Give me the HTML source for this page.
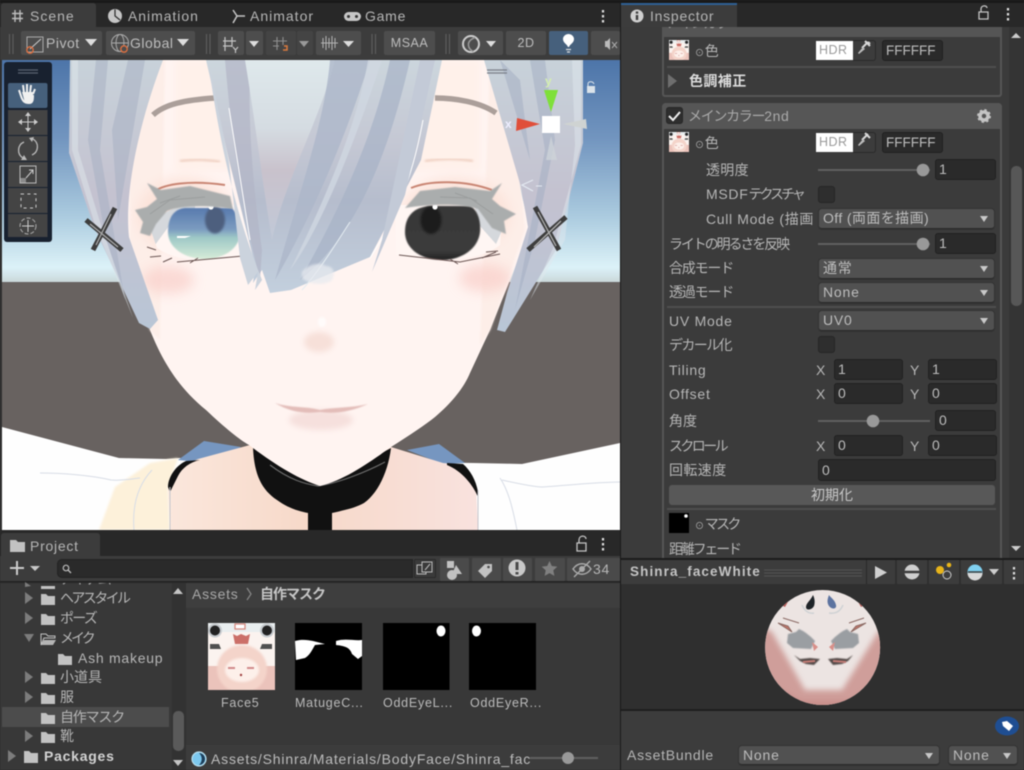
<!DOCTYPE html>
<html><head><meta charset="utf-8"><style>
html,body{margin:0;padding:0;background:#282828;width:1024px;height:770px;overflow:hidden}
#r{position:relative;width:1024px;height:770px;overflow:hidden;filter:blur(.4px);font-family:"Liberation Sans","Noto Sans CJK JP",sans-serif}
#r div{position:absolute;box-sizing:border-box}
.t{white-space:nowrap;height:16px;line-height:16px;font-size:14px;letter-spacing:.75px;color:#b6b6b6}
.c{letter-spacing:0;}
.b{font-weight:bold;color:#d4d4d4}
.dd{background:#515151;border-radius:3px;border-bottom:1px solid #2b2b2b;box-shadow:0 0 0 1px #333;color:#bdbdbd;font-size:14px;letter-spacing:.8px;line-height:19px;padding-left:4px;white-space:nowrap}
.dd:after{content:"";position:absolute;right:6px;top:7px;border:4.5px solid transparent;border-top:6px solid #c8c8c8;border-bottom:0}
.f{background:#2a2a2a;border:1px solid #212121;border-radius:3px;color:#bdbdbd;font-size:14px;letter-spacing:.6px;line-height:19px;padding-left:3px;white-space:nowrap}
.btn{background:#4d4d4d;border-radius:2px;color:#bdbdbd;font-size:12.5px;letter-spacing:.5px;text-align:center;line-height:24px;white-space:nowrap}
.pb{background:#4a4a4a;border-radius:1px}
.cb{background:#2e2e2e;border:1px solid #262626;border-radius:3px}
</style></head><body><div id="r">

<div style="left:0;top:0;width:1024px;height:3px;background:#191919"></div>
<div style="left:0;top:3px;width:620px;height:24px;background:#282828"></div>
<div style="left:1px;top:3px;width:95px;height:24px;background:#3c3c3c;border-radius:3px 3px 0 0"></div>
<div class="t" style="left:30px;top:8px;letter-spacing:1px">Scene</div>
<div class="t" style="left:128px;top:8px;letter-spacing:.95px">Animation</div>
<div class="t" style="left:250px;top:8px;letter-spacing:1px">Animator</div>
<div class="t" style="left:365px;top:8px">Game</div>
<div style="left:0;top:27px;width:620px;height:33px;background:#3c3c3c"></div>

<div class="btn" style="left:21px;top:31px;width:81px;height:24px;text-align:left;padding-left:25px;font-size:14px">Pivot</div>
<div class="btn" style="left:106px;top:31px;width:89px;height:24px;text-align:left;padding-left:24px;font-size:14px">Global</div>
<div class="btn" style="left:218px;top:31px;width:26px;height:24px"></div>
<div class="btn" style="left:246px;top:31px;width:17px;height:24px"></div>
<div class="btn" style="left:266px;top:31px;width:30px;height:24px;background:#444"></div>
<div class="btn" style="left:297px;top:31px;width:16px;height:24px;background:#444"></div>
<div class="btn" style="left:316px;top:31px;width:45px;height:24px"></div>
<div class="btn" style="left:384px;top:31px;width:51px;height:24px">MSAA</div>
<div class="btn" style="left:458px;top:31px;width:45px;height:24px"></div>
<div class="btn" style="left:506px;top:31px;width:40px;height:24px">2D</div>
<div class="btn" style="left:549px;top:31px;width:39px;height:24px;background:#46607c"></div>
<div class="btn" style="left:591px;top:31px;width:29px;height:24px"></div>

<!-- SCENE -->
<svg style="position:absolute;left:0;top:0" width="1024" height="770" viewBox="0 0 1024 770">
<defs>
<clipPath id="sc"><rect x="2" y="60" width="618" height="470"/></clipPath>
<linearGradient id="sky" x1="0" y1="60" x2="0" y2="283" gradientUnits="userSpaceOnUse"><stop offset="0" stop-color="#4d75a9"/><stop offset=".35" stop-color="#7295bf"/><stop offset=".7" stop-color="#abcbdf"/><stop offset=".93" stop-color="#dcf2f8"/><stop offset="1" stop-color="#c9d6d8"/></linearGradient>
<linearGradient id="hc" x1="0" y1="60" x2="0" y2="295" gradientUnits="userSpaceOnUse"><stop offset="0" stop-color="#ccd6dd"/><stop offset=".35" stop-color="#c5c8d4"/><stop offset=".6" stop-color="#b6bdcd"/><stop offset="1" stop-color="#c3d0de"/></linearGradient>
<linearGradient id="hl" x1="0" y1="60" x2="0" y2="230" gradientUnits="userSpaceOnUse"><stop offset="0" stop-color="#dfe9ec"/><stop offset=".4" stop-color="#d5dce2"/><stop offset=".65" stop-color="#c9c2cc"/><stop offset="1" stop-color="#c2c8d6"/></linearGradient>
<linearGradient id="hs" x1="0" y1="60" x2="0" y2="330" gradientUnits="userSpaceOnUse"><stop offset="0" stop-color="#c8d2da"/><stop offset=".5" stop-color="#c4c2d0"/><stop offset="1" stop-color="#b9c6d6"/></linearGradient>
<linearGradient id="iris" x1="0" y1="208" x2="0" y2="259" gradientUnits="userSpaceOnUse"><stop offset="0" stop-color="#587aae"/><stop offset=".42" stop-color="#7c9cc0"/><stop offset=".58" stop-color="#9ec8c6"/><stop offset="1" stop-color="#d6ecd8"/></linearGradient>
<linearGradient id="ir2" x1="0" y1="205" x2="0" y2="262" gradientUnits="userSpaceOnUse"><stop offset="0" stop-color="#383838"/><stop offset=".8" stop-color="#3b3b3b"/><stop offset="1" stop-color="#1c1c1c"/></linearGradient>
<linearGradient id="neck" x1="170" y1="0" x2="478" y2="0" gradientUnits="userSpaceOnUse"><stop offset="0" stop-color="#fbe7dc"/><stop offset=".45" stop-color="#f7d9c9"/><stop offset="1" stop-color="#f9e2de"/></linearGradient>
<filter id="b05"><feGaussianBlur stdDeviation=".5"/></filter>
<filter id="b1"><feGaussianBlur stdDeviation="1"/></filter>
<filter id="b3" x="-50%" y="-50%" width="200%" height="200%"><feGaussianBlur stdDeviation="3"/></filter>
<filter id="b6" x="-50%" y="-50%" width="200%" height="200%"><feGaussianBlur stdDeviation="6"/></filter>
<clipPath id="el"><path d="M150,228C158,214 175,206 190,205H245L250,257C215,263 178,263 157,248Z"/></clipPath>
<clipPath id="er"><path d="M395,205H480L502,222 500,245C480,262 430,264 396,255Z"/></clipPath>
<clipPath id="sph"><circle cx="822.6" cy="647.5" r="57.5"/></clipPath>
<symbol id="face" viewBox="0 0 67 67">
<rect width="67" height="67" fill="#ebc3bb"/><rect width="67" height="43" fill="#fbf3ef"/><rect width="67" height="9" fill="#e9eeef"/>
<circle cx="7" cy="7.5" r="7" fill="#c8ccd0"/><circle cx="7" cy="7.5" r="5" fill="#222"/><circle cx="59" cy="7.5" r="7" fill="#c8ccd0"/><circle cx="59" cy="7.5" r="5" fill="#222"/>
<rect x="27" y="1" width="10" height="5" fill="#fff" stroke="#d58a80" stroke-width="1.3"/><path d="M25,11L29,13 33,11 38,13 42,11 40,21 27,21Z" fill="#cb6f68"/>
<path d="M2,21h9l2,5h-11zM54,21h10v5h-12z" fill="#505050"/>
<ellipse cx="34" cy="46" rx="25" ry="24" fill="#f4d4ca" filter="url(#b1)"/><ellipse cx="34" cy="47" rx="17" ry="12" fill="#fdf0ea" filter="url(#b1)"/>
<rect x="20" y="44" width="7" height="2" fill="#d08a8a"/><rect x="39" y="44" width="7" height="2" fill="#d08a8a"/><circle cx="33" cy="52" r="1.200" fill="#a04040"/>
</symbol>
</defs>

<g clip-path="url(#sc)">
<rect x="0" y="60" width="620" height="224" fill="url(#sky)"/>
<rect x="0" y="282" width="620" height="250" fill="#686260"/>
<path d="M2,427L119,458 166,459 180,458 474,463 522,464 620,443V530H2Z" fill="#fefefe"/>
<path d="M99,530L115,487 150,463 178,458 168,487 170,530Z" fill="#fdf1da" filter="url(#b1)"/>
<path d="M40,473C60,473 90,475 111,480C122,481 130,479 140,478M502,480C520,484 535,487 542,487C570,485 600,482 620,482M134,530C132,505 138,485 152,470M517,530C512,505 508,490 500,478" fill="none" stroke="#d8dde6" stroke-width="1"/>
<path d="M178,460L204,441 241,447 215,462 198,462ZM407,450L439,444 465,463 443,464Z" fill="#7696c0"/>
<path d="M168,487L176,468 198,459 250,445 391,447 443,463 463,465 476,487 478,530H170Z" fill="url(#neck)"/>
<path d="M168,487C168,478 175,466 186,461L200,460C190,462 182,468 178,476L170,492ZM447,463L463,464C470,470 476,480 478,492L478,497C473,485 462,471 447,465Z" fill="#111"/>
<path d="M170,487L170,530M478,490L478,530" stroke="#c6c6cc" stroke-width="1"/>
<path d="M253,447C254,475 262,490 277,500C288,508 298,511 308,513V530H332V513C345,510 355,508 364,503C378,493 388,472 391,448L320,486Z" fill="#111"/>
<path d="M270,465C290,480 305,484 318,486C340,483 370,470 385,462" fill="none" stroke="#6a6a6a" stroke-width="1.200"/>
<path d="M125,60L125,240 150,330C160,355 175,385 206,410C225,428 240,440 249,445C275,465 300,480 320,486C345,480 370,462 391,447C410,435 425,425 435,417C455,400 465,385 470,373L490,330 530,230 490,60Z" fill="#fff4f1"/>
<path d="M130,60L130,240 150,330 160,340 165,60ZM510,60L525,230 490,330 480,345 490,60Z" fill="#fdeee8" filter="url(#b1)"/>
<rect x="175" y="60" width="305" height="110" fill="#fff1ea" opacity=".9" filter="url(#b3)"/>
<!-- blush -->
<ellipse cx="168" cy="280" rx="26" ry="14" fill="#f9cfc9" opacity=".7" filter="url(#b6)"/>
<ellipse cx="485" cy="278" rx="26" ry="14" fill="#f9cfc9" opacity=".7" filter="url(#b6)"/>
<ellipse cx="185" cy="215" rx="48" ry="38" fill="#fce1d7" opacity=".8" filter="url(#b6)"/>
<ellipse cx="455" cy="215" rx="55" ry="38" fill="#fce1d7" opacity=".8" filter="url(#b6)"/>
<!-- brows -->
<path d="M153,115C165,104 185,100 215,98" fill="none" stroke="#ab9f9a" stroke-width="5.500"/>
<path d="M435,98C455,98 480,102 496,113" fill="none" stroke="#ab9f9a" stroke-width="5.500"/>
<path d="M180,161Q200,158 220,162M425,161Q450,157 473,161" fill="none" stroke="#eac5b4" stroke-width="2" filter="url(#b1)" opacity=".9"/>
<path d="M155,191C165,184 190,180 225,185M411,188C430,180 465,180 492,190" fill="none" stroke="#c98674" stroke-width="2"/>
<!-- left eye -->
<path d="M150,228C158,214 175,206 190,205H245L250,257C215,263 178,263 157,248Z" fill="#fff6f3"/>
<g clip-path="url(#el)"><path d="M145,235C155,215 170,205 195,205V222H172L155,245Z" fill="#d5d8dc"/>
<path d="M168,232C168,216 175,209 185,208H232C238,215 241,225 240,235C238,250 222,259 205,259C185,259 168,248 168,232Z" fill="url(#iris)" filter="url(#b05)"/>
<ellipse cx="215" cy="220" rx="10" ry="13.500" fill="#4d5f7e" filter="url(#b1)"/>
<path d="M177,236h14l-6,2h-8z" fill="#fff"/></g>
<circle cx="211" cy="207" r="2.600" fill="#fff"/>
<!-- right eye -->
<path d="M395,205H480L502,222 500,245C480,262 430,264 396,255Z" fill="#fff6f3"/>
<g clip-path="url(#er)"><path d="M474,204L504,226 496,244 480,226Z" fill="#d5d8dc"/>
<path d="M405,232C405,215 415,207 430,206H470C478,210 481,222 480,232C478,250 460,260 442,260C420,260 405,248 405,232Z" fill="url(#ir2)" filter="url(#b05)"/>
<ellipse cx="431" cy="220" rx="10.500" ry="14" fill="#1e1e1e" filter="url(#b1)"/></g>
<circle cx="435" cy="207" r="2.600" fill="#fff"/>
<!-- lashes -->
<path d="M147,183L161,190 190,186 230,196 233,209C210,205 180,205 167,211L156,224 150,236 140,233 143,222 135,210 147,207 157,199Z" fill="#aaadad" filter="url(#b05)"/>
<path d="M502,183L490,191 455,187 420,191 405,208C430,204 460,203 478,209L492,228 506,234 504,221 516,214 500,206 492,199Z" fill="#aaadad" filter="url(#b05)"/>
<path d="M150,214L170,200 205,197M160,203l20,-7M440,197L470,198 493,214M455,193l22,8" fill="none" stroke="#979a9a" stroke-width="1" opacity=".8"/>
<path d="M147,247l9,3M150,257l11,-1M163,262l9,-4M177,262L243,256M190,263l8,-5" fill="none" stroke="#6a5553" stroke-width="1"/>
<path d="M399,255L460,262 500,254M458,264l-8,-5M482,258l14,-6M486,252l12,-1" fill="none" stroke="#6a5553" stroke-width="1"/>
<!-- nose / mouth -->
<ellipse cx="319" cy="342" rx="15" ry="10" fill="#f7e0d9" filter="url(#b3)"/>
<ellipse cx="322" cy="322" rx="4" ry="5" fill="#fff" opacity=".7" filter="url(#b1)"/>
<ellipse cx="321" cy="420" rx="32" ry="10" fill="#f6e0dd" filter="url(#b3)"/>
<path d="M275,403C290,408 305,406 320,410C335,407 352,408 368,404C350,412 335,414 320,412C305,414 290,412 275,403Z" fill="#e3bdb9" filter="url(#b05)"/>
<!-- side hair left -->
<path d="M70,60L69,153 94,227 139,323 150,329 158,320 129,237C124,190 140,120 163,60Z" fill="url(#hs)"/>
<path d="M96,60L88,140 105,235 125,300 100,150 108,60ZM128,60L112,130 118,220 145,60Z" fill="#a8b0c3" opacity=".55"/>
<path d="M72,60L72,150 95,225 133,318 100,222 78,150 78,60Z" fill="#dfe7ec" opacity=".5"/>
<!-- side hair right -->
<path d="M484,60L521,187 528,227 507,293 497,330 505,332 556,250 583,143 583,60Z" fill="url(#hs)"/>
<path d="M545,60L555,140 535,240 515,310 545,150 530,60ZM500,60L530,160 520,80Z" fill="#a4aec2" opacity=".55"/>
<path d="M581,60L581,145 553,248 530,300 565,240 575,145 572,60Z" fill="#e0e8ed" opacity=".5"/>
<!-- centre hair -->
<path d="M206,60L229,160 253,257 246,275 255,268 253,283 262,270 270,293 291,290 370,257 421,160 442,60Z" fill="url(#hc)"/>
<path d="M225,60C232,140 240,200 260,280L262,250C252,180 248,120 250,60Z" fill="#b2b5c6" opacity=".7"/>
<path d="M245,60C255,120 262,180 272,240C285,180 320,120 335,60Z" fill="url(#hl)"/>
<path d="M330,60C325,120 300,190 275,280C310,220 345,140 370,60Z" fill="#adb7c9" opacity=".8"/>
<path d="M368,60C358,120 330,190 290,270C320,230 352,150 382,60Z" fill="#d0d7e1" opacity=".8"/>
<path d="M390,60C375,130 345,200 300,280C350,240 385,170 410,60Z" fill="#a7b2c6" opacity=".7"/>
<path d="M208,60C220,150 238,220 262,280L255,290 258,272 248,285 240,258 229,162Z" fill="#cbd3dd"/>
<path d="M229,108L250,240M423,120C412,180 395,220 370,258" fill="none" stroke="#fff" stroke-width="1"/>
<path d="M420,60H435L405,195 372,272 382,240Z" fill="#c3cad7"/>
<path d="M302,290C320,270 335,245 350,222" fill="none" stroke="#e5edf2" stroke-width="1"/>
<path d="M302,272c6,-8 18,-10 24,-6 7,0 10,6 6,14 -5,5 -22,6 -30,-2Z" fill="#e8ebf0" opacity=".75" filter="url(#b1)"/>
<!-- pins -->
<path d="M86,220L122,250M115,208L93,250" stroke="#3d3d3d" stroke-width="5" fill="none"/>
<path d="M90,224L118,247M111,214L96,245" stroke="#a8a8a8" stroke-width="1.300" fill="none"/>
<path d="M535,207L559,250M566,217L528,250" stroke="#3d3d3d" stroke-width="5" fill="none"/>
<path d="M538,212L556,246M561,221L534,247" stroke="#b0b0b0" stroke-width="1.300" fill="none"/>
<path d="M487,70h20M487,73h20" stroke="#7a7f88" stroke-width="1.200"/>
<!-- gizmo -->
<path d="M551,112L544,90H558Z" fill="#7fe03a"/>
<path d="M540,124L517,118 516,131Z" fill="#e04f3a"/>
<path d="M563,124L586,119 587,129Z" fill="#cfd3d2"/>
<path d="M551,136L546,160H557Z" fill="#cdd3d8" opacity=".8"/>
<rect x="542" y="116" width="18" height="17" fill="#fff"/>
<path d="M533,180L522,185 533,191" fill="none" stroke="#e3e9f1" stroke-width="1.200"/>
<path d="M536,186h6" stroke="#e3e9f1" stroke-width="1"/>
<rect x="587" y="86" width="8" height="7" fill="#dbe3ea"/><path d="M588,86v-2c0,-3 5,-3 6,0" fill="none" stroke="#dbe3ea"/>
</g>

<text x="505" y="128" font-size="12" font-weight="bold" fill="#eef" font-family="Liberation Sans">x</text>
<text x="545" y="85" font-size="12" font-weight="bold" fill="#d4eeb0" font-family="Liberation Sans">y</text>

<!-- overlay tool -->
<rect x="4" y="62" width="48" height="180" rx="3" fill="#18212f"/>
<path d="M18,70h20M18,73h20" stroke="#596371" stroke-width="1.200"/>
<rect x="8" y="83" width="39.500" height="25" rx="2" fill="#46607c"/>
<rect x="8" y="110" width="39.500" height="25" fill="#444"/>
<rect x="8" y="136" width="39.500" height="25" fill="#444"/>
<rect x="8" y="162" width="39.500" height="25" fill="#444"/>
<rect x="8" y="188" width="39.500" height="25" fill="#444"/>
<rect x="8" y="214" width="39.500" height="23" fill="#444"/>
<path d="M21,96l-2,-6M24,93l-1,-8M27,93l0,-9M30,93l1,-8M33,94l2,-5M21,96c2,6 4,7 8,7 4,0 4,-4 4,-8" stroke="#f0f0f0" stroke-width="2" fill="none"/><path d="M22,92h11v8l-3,3h-5Z" fill="#f0f0f0"/>
<path d="M28,114v16M20,122h16" stroke="#ccc" stroke-width="1"/><path d="M28,112l-3,4h6zM28,132l-3,-4h6zM18,122l4,-3v6zM38,122l-4,-3v6z" fill="#ccc"/>
<path d="M24,142a9,9 0 0 0 -1,16M32,155a9,9 0 0 0 1,-16" fill="none" stroke="#bbb" stroke-width="1.300"/><path d="M24,155l3,5h-6zM32,142l-3,-4 5,-1z" fill="#bbb"/>
<rect x="20" y="166" width="16" height="17" fill="none" stroke="#bbb" stroke-width="1"/><path d="M26,178l7,-8M29,170h4v4" fill="none" stroke="#ccc"/><rect x="20" y="178" width="6" height="5" fill="#bbb" opacity=".6"/>
<rect x="21" y="194" width="15" height="14" fill="none" stroke="#ccc" stroke-dasharray="3 3.400"/>
<circle cx="28" cy="226" r="8" fill="none" stroke="#aaa" stroke-dasharray="4 2"/><path d="M28,220v12M22,226h12" stroke="#ccc"/>

<!-- tab icons -->
<path d="M15,10v12M20,10v12M12,13.500h11M12,18.500h11" stroke="#bdbdbd" stroke-width="1.400"/>
<circle cx="115" cy="16" r="7" fill="#c6c6c6"/><path d="M115,9.500v6.500l5,4" stroke="#282828" fill="none" stroke-width="1.200"/>
<path d="M233,10l4,6 -4,7M237,16h8" stroke="#c6c6c6" stroke-width="1.500" fill="none"/>
<rect x="344" y="12" width="17" height="9" rx="4.500" fill="#c6c6c6"/><circle cx="348.500" cy="16.500" r="1.500" fill="#333"/><circle cx="356.500" cy="16.500" r="1.500" fill="#333"/>
<path d="M603,10v2.500M603,15v2.500M603,20v2.500" stroke="#ddd" stroke-width="2.200" fill="none"/>
<!-- toolbar grips and icons -->
<path d="M9.500,34v20M13,34v20M206.500,34v20M210,34v20M372,34v20M375.500,34v20M446,34v20M449.500,34v20" stroke="#5c5c5c" stroke-width="1.200"/>
<rect x="27" y="37" width="16" height="15" fill="none" stroke="#aaa"/><path d="M30,49L41,39" stroke="#ccc"/><circle cx="30" cy="50" r="3.200" fill="none" stroke="#e07040" stroke-width="1.300"/>
<path d="M85,39h12l-6,7Z" fill="#ddd"/>
<circle cx="120" cy="43" r="8.500" fill="none" stroke="#aaa"/><ellipse cx="120" cy="43" rx="4" ry="8.500" fill="none" stroke="#aaa"/><path d="M111.500,43h17" stroke="#aaa"/><circle cx="124" cy="49" r="3.200" fill="#4d4d4d" stroke="#e07040" stroke-width="1.300"/>
<path d="M177,39h12l-6,7Z" fill="#ddd"/>
<path d="M225,37v14M232,37v10M223,41h13M223,46h9M233,47l2.500,3 2.500,-3M235.500,50v3" stroke="#c4c4c4" fill="none" stroke-width="1.200"/>
<path d="M249,41h10l-5,6Z" fill="#ddd"/>
<path d="M277,37v13M283,37v8M273,41h14M273,46h6" stroke="#8e8e8e" fill="none" stroke-width="1.100"/><path d="M284,46h3v4h-4" stroke="#d97a3f" fill="none" stroke-width="1.500"/>
<path d="M299,41h10l-5,6Z" fill="#999"/>
<path d="M321,43h17M323,38v10M326,36v14M329,38v10M332,36v14M335,38v10" stroke="#b4b4b4" fill="none"/>
<path d="M343,41h11l-5.500,6Z" fill="#ddd"/>
<circle cx="471" cy="44" r="8" fill="none" stroke="#ccc" stroke-width="2"/><path d="M475,37.500c-5,2 -7,5 -6.500,8 .4,3 2.500,5 5,6" fill="none" stroke="#999" stroke-width="1.500"/>
<path d="M486,41h10l-5,6Z" fill="#ddd"/>
<path d="M568,47c-1,-3 -5,-4 -5,-8 0,-3 3,-5 5.500,-5 2.500,0 5.500,2 5.500,5 0,4 -4,5 -5,8Z" fill="#fff"/><path d="M566,49.500h5M567,52h3" stroke="#ddd" stroke-width="1.300"/>
<path d="M605,41h2l3,-3v12l-3,-3h-2Z" fill="#bbb"/><path d="M612,42l5,6M617,42l-5,6" stroke="#aaa" stroke-width="1"/>
</svg>

<!-- Vertical gap -->
<div style="left:620px;top:3px;width:1px;height:767px;background:#1a1a1a"></div>
<div style="left:0;top:60px;width:2px;height:470px;background:#303030"></div>

<!-- PROJECT -->
<div style="left:0;top:530px;width:620px;height:27px;background:#282828"></div>
<div style="left:1px;top:533px;width:99px;height:24px;background:#3c3c3c;border-radius:3px 3px 0 0"></div>
<div class="t" style="left:30px;top:538px">Project</div>
<div style="left:0;top:556px;width:620px;height:26px;background:#3c3c3c;border-bottom:1px solid #232323"></div>
<div style="left:57px;top:559px;width:356px;height:19px;background:#2a2a2a;border:1px solid #232323;border-radius:5px 0 0 5px"></div>
<div class="pb" style="left:414px;top:559px;width:22px;height:19px;background:#3a3a3a;border:1px solid #2a2a2a"></div>
<div class="pb" style="left:440px;top:558px;width:29px;height:23px"></div>
<div class="pb" style="left:472px;top:558px;width:29px;height:23px"></div>
<div class="pb" style="left:503px;top:558px;width:29px;height:23px"></div>
<div class="pb" style="left:535px;top:558px;width:30px;height:23px"></div>
<div class="pb" style="left:567px;top:558px;width:53px;height:23px"></div>
<div class="t" style="left:593px;top:561px">34</div>

<div style="left:0;top:583px;width:186px;height:187px;background:#383838"></div>
<div style="left:172px;top:583px;width:14px;height:187px;background:#323232"></div>
<div style="left:173px;top:711px;width:11px;height:40px;background:#5a5a5a;border-radius:5px"></div>
<div style="left:2px;top:707px;width:167px;height:20px;background:#4c4c4c"></div>
<div style="left:60px;top:583px;width:60px;height:4px;overflow:hidden"><div class="t c" style="left:0;top:-12px;letter-spacing:-1px">アイテム</div></div>
<div class="t c" style="left:60px;top:590px;letter-spacing:-2.6px">ヘアスタイル</div>
<div class="t c" style="left:60px;top:610px;letter-spacing:-1.7px">ポーズ</div>
<div class="t c" style="left:60px;top:630px;letter-spacing:-3px">メイク</div>
<div class="t" style="left:78px;top:650px">Ash makeup</div>
<div class="t c" style="left:60px;top:669px">小道具</div>
<div class="t c" style="left:60px;top:689px">服</div>
<div class="t c" style="left:60px;top:709px;letter-spacing:-1.200px">自作マスク</div>
<div class="t c" style="left:60px;top:728px">靴</div>
<div class="t b" style="left:44px;top:748px">Packages</div>

<div style="left:186px;top:583px;width:434px;height:187px;background:#383838"></div>
<div style="left:186px;top:583px;width:434px;height:25px;background:#3e3e3e"></div>
<div class="t" style="left:192px;top:586px;color:#a8a8a8">Assets</div>
<div class="t b c" style="left:260px;top:586px;color:#c6c6c6;letter-spacing:-1px">自作マスク</div>
<div class="t" style="left:221px;top:695px;font-size:12.500px;color:#bbb">Face5</div>
<div class="t" style="left:295px;top:695px;font-size:12.500px;color:#bbb">MatugeC...</div>
<div class="t" style="left:383px;top:695px;font-size:12.500px;color:#bbb">OddEyeL...</div>
<div class="t" style="left:470px;top:695px;font-size:12.500px;color:#bbb">OddEyeR...</div>
<div style="left:186px;top:745px;width:434px;height:25px;background:#3c3c3c"></div>
<div class="t" style="left:211px;top:751px;width:319px;overflow:hidden;color:#bdbdbd;letter-spacing:.82px">Assets/Shinra/Materials/BodyFace/Shinra_faceWhite</div>

<!-- INSPECTOR -->
<div style="left:621px;top:3px;width:403px;height:24px;background:#282828"></div>
<div style="left:621px;top:4px;width:116px;height:23px;background:#3c3c3c"></div>
<div style="left:621px;top:3px;width:116px;height:2px;background:#2e6094"></div>
<div class="t" style="left:650px;top:8px">Inspector</div>
<div style="left:621px;top:27px;width:403px;height:532px;background:#3b3b3b"></div>
<div style="left:1009px;top:27px;width:15px;height:532px;background:#343434"></div>
<div style="left:1011px;top:166px;width:11px;height:140px;background:#575757;border-radius:5px"></div>

<div style="left:662px;top:27px;width:340px;height:70px;background:#3b3b3b;border:2px solid #555;border-top:0;border-radius:0 0 3px 3px"></div>
<div style="left:662px;top:27px;width:340px;height:10px;background:#555"></div>
<div style="left:667px;top:27px;width:60px;height:3px;overflow:hidden"><div class="t c" style="left:0;top:-12px;color:#aaa;letter-spacing:-2px">メインカラー</div></div>

<div style="left:662px;top:103px;width:340px;height:456px;background:#3b3b3b;border:2px solid #555;border-bottom:0;border-radius:4px 4px 0 0"></div>
<div style="left:662px;top:103px;width:340px;height:26px;background:#565656;border-radius:4px 4px 0 0"></div>
<div class="cb" style="left:666px;top:107px;width:17px;height:17px"></div>
<div class="t" style="left:688px;top:108px;color:#aaa;letter-spacing:-1.300px">メインカラー<span style="letter-spacing:.6px">2nd</span></div>

<!-- colour rows -->
<div style="left:816px;top:41px;width:37px;height:19px;background:#fff;color:#999;font-size:12.500px;letter-spacing:.5px;line-height:19px;padding-left:3px">HDR</div>
<div style="left:853px;top:40px;width:23px;height:21px;background:#3c3c3c;border:1px solid #2a2a2a;border-left:0;border-radius:0 3px 3px 0"></div>
<div class="f" style="left:882px;top:40px;width:61px;height:21px;line-height:19px;letter-spacing:0;padding-left:3px;font-size:13.500px">FFFFFF</div>
<div style="left:667px;top:66px;width:329px;height:2px;background:#4e4e4e"></div>
<div class="t b c" style="left:689px;top:73px;color:#dcdcdc;letter-spacing:.4px">色調補正</div>

<div style="left:816px;top:133px;width:37px;height:19px;background:#fff;color:#999;font-size:12.500px;letter-spacing:.5px;line-height:19px;padding-left:3px">HDR</div>
<div style="left:853px;top:132px;width:23px;height:21px;background:#3c3c3c;border:1px solid #2a2a2a;border-left:0;border-radius:0 3px 3px 0"></div>
<div class="f" style="left:882px;top:132px;width:61px;height:21px;letter-spacing:0;font-size:13.500px">FFFFFF</div>

<div class="t" style="left:695px;top:43px"><span style="font-size:9px">⊙</span>色</div>
<div class="t" style="left:695px;top:135px"><span style="font-size:9px">⊙</span>色</div>
<div class="t c" style="left:706px;top:162px;letter-spacing:.3px">透明度</div>
<div class="t" style="left:706px;top:186px"><span style="letter-spacing:.7px">MSDF</span><span style="letter-spacing:-3px">テクスチャ</span></div>
<div class="t" style="left:706px;top:211px;width:109px;overflow:hidden;letter-spacing:.65px">Cull Mode (描画モード)</div>
<div class="t c" style="left:669px;top:236px;letter-spacing:-2.100px">ライトの明るさを反映</div>
<div class="t c" style="left:669px;top:260px;letter-spacing:-1.200px">合成モード</div>
<div class="t c" style="left:669px;top:284px;letter-spacing:-1.200px">透過モード</div>
<div class="t" style="left:669px;top:313px">UV Mode</div>
<div class="t c" style="left:669px;top:337px;letter-spacing:-1.600px">デカール化</div>
<div class="t" style="left:669px;top:362px">Tiling</div>
<div class="t" style="left:669px;top:386px">Offset</div>
<div class="t c" style="left:669px;top:413px">角度</div>
<div class="t c" style="left:669px;top:438px;letter-spacing:-2.600px">スクロール</div>
<div class="t c" style="left:669px;top:462px;letter-spacing:.4px">回転速度</div>
<div class="t" style="left:695px;top:516px"><span style="font-size:9px">⊙</span><span style="letter-spacing:-2.700px">マスク</span></div>
<div class="t c" style="left:669px;top:541px;letter-spacing:-2.200px">距離フェード</div>

<div style="left:818px;top:169px;width:112px;height:2px;background:#5f5f5f"></div>
<div class="f" style="left:935px;top:159px;width:61px;height:21px">1</div>
<div class="cb" style="left:818px;top:186px;width:17px;height:17px"></div>
<div class="dd" style="left:819px;top:209px;width:175px;height:20px;letter-spacing:.4px">Off (両面を描画)</div>
<div style="left:818px;top:243px;width:112px;height:2px;background:#5f5f5f"></div>
<div class="f" style="left:935px;top:233px;width:61px;height:21px">1</div>
<div class="dd" style="left:819px;top:259px;width:175px;height:20px">通常</div>
<div class="dd" style="left:819px;top:283px;width:175px;height:20px">None</div>
<div style="left:667px;top:306px;width:329px;height:2px;background:#4e4e4e"></div>
<div class="dd" style="left:819px;top:311px;width:175px;height:20px">UV0</div>
<div class="cb" style="left:818px;top:336px;width:17px;height:17px"></div>
<div class="t" style="left:816px;top:362px">X</div><div class="f" style="left:834px;top:359px;width:69px;height:21px">1</div>
<div class="t" style="left:910px;top:362px">Y</div><div class="f" style="left:928px;top:359px;width:69px;height:21px">1</div>
<div class="t" style="left:816px;top:386px">X</div><div class="f" style="left:834px;top:383px;width:69px;height:21px">0</div>
<div class="t" style="left:910px;top:386px">Y</div><div class="f" style="left:928px;top:383px;width:69px;height:21px">0</div>
<div style="left:818px;top:420px;width:112px;height:2px;background:#5f5f5f"></div>
<div class="f" style="left:935px;top:410px;width:61px;height:21px;padding-left:3px">0</div>
<div class="t" style="left:816px;top:438px">X</div><div class="f" style="left:834px;top:435px;width:69px;height:21px">0</div>
<div class="t" style="left:910px;top:438px">Y</div><div class="f" style="left:928px;top:435px;width:69px;height:21px">0</div>
<div class="f" style="left:818px;top:459px;width:178px;height:22px;line-height:20px">0</div>
<div style="left:669px;top:485px;width:326px;height:20px;background:#585858;border-radius:3px;color:#c8c8c8;font-size:14px;line-height:20px;text-align:center;padding-right:0">初期化</div>
<div style="left:667px;top:508px;width:329px;height:2px;background:#4e4e4e"></div>

<!-- PREVIEW -->
<div style="left:621px;top:558px;width:403px;height:2px;background:#1c1c1c"></div>
<div style="left:621px;top:560px;width:403px;height:24px;background:#3c3c3c"></div>
<div class="t" style="left:630px;top:564px;color:#c4c4c4;letter-spacing:1.100px;font-weight:bold;font-size:13.500px">Shinra_faceWhite</div>
<div style="left:621px;top:584px;width:403px;height:125px;background:#2f2f2f"></div>
<div style="left:621px;top:709px;width:403px;height:2px;background:#1e1e1e"></div>
<div style="left:621px;top:711px;width:403px;height:59px;background:#3c3c3c"></div>
<div class="t" style="left:627px;top:747px">AssetBundle</div>
<div class="dd" style="left:739px;top:746px;width:200px;height:19px">None</div>
<div class="dd" style="left:949px;top:746px;width:68px;height:19px">None</div>

<!-- foreground icons -->
<svg style="position:absolute;left:0;top:0" width="1024" height="770" viewBox="0 0 1024 770">
<!-- inspector tab icon -->
<circle cx="637" cy="16" r="6.500" fill="#d0d0d0"/><rect x="635.800" y="15" width="2.400" height="5" fill="#3c3c3c"/><rect x="635.800" y="11.500" width="2.400" height="2.200" fill="#3c3c3c"/>
<!-- project icons -->
<path d="M10,552v-12h6l2,2h7v10Z" fill="#c2c2c2"/>
<path d="M582,546v8h9v-8ZM584,546v-3c0,-5 7,-5 7,-1" fill="none" stroke="#c4c4c4" stroke-width="1.300" transform="translate(-5,-3)"/>
<path d="M603,538v2.500M603,543v2.500M603,548v2.500M1008,8v2.500M1008,13v2.500M1008,18v2.500" stroke="#ddd" stroke-width="2.200" fill="none"/>
<path d="M979,18h9v7h-9ZM981,18v-3c0,-4 6,-4 6,-1" fill="none" stroke="#c4c4c4" stroke-width="1.300" transform="translate(0,-6)"/>
<path d="M17,561v14M10,568h14" stroke="#ccc" stroke-width="2"/><path d="M30,566h10l-5,5Z" fill="#c8c8c8"/>
<circle cx="66" cy="568" r="2.800" fill="none" stroke="#bbb" stroke-width="1.200"/><path d="M68,570l3,3" stroke="#bbb" stroke-width="1.300"/>
<rect x="417" y="565" width="9" height="9" fill="none" stroke="#bbb"/><rect x="422" y="562" width="10" height="10" fill="#3a3a3a" stroke="#bbb"/><path d="M425,570l5,-6" stroke="#bbb"/>
<circle cx="452" cy="575" r="5" fill="#c2c2c2"/><rect x="447" y="561" width="7" height="7" fill="#c2c2c2"/><path d="M456,565l6,9h-10Z" fill="#c2c2c2"/>
<path d="M478,571l7,-7h7v7l-7,7Z" fill="#c2c2c2"/><circle cx="488.500" cy="567" r="1.300" fill="#4a4a4a"/>
<circle cx="517" cy="568" r="8.500" fill="#c9c9c9"/><rect x="515.500" y="562" width="3" height="8" fill="#4a4a4a"/><rect x="515.500" y="572" width="3" height="2.500" fill="#4a4a4a"/>
<path d="M549.500,561l2.300,5 5.500,.6 -4,3.800 1.100,5.500 -4.900,-2.800 -4.900,2.800 1.100,-5.500 -4,-3.800 5.500,-.6Z" fill="#808080"/>
<path d="M573,569c5,-7 13,-7 18,0c-5,7 -13,7 -18,0Z" fill="none" stroke="#aaa" stroke-width="1.500"/><circle cx="582" cy="569" r="3" fill="#aaa"/><path d="M574,577L590,561" stroke="#aaa" stroke-width="1.300"/>
<!-- tree -->
<g fill="#c2c2c2">
<path d="M41,589v-3h14v3Z"/>
<path d="M41,605v-11h5l2,2h7v9Z"/><path d="M41,625v-11h5l2,2h7v9Z"/>
<path d="M41,645v-11h5l2,2h7v2h-11l-3,7Z" fill="none" stroke="#c2c2c2"/><path d="M44,640h12l-3,5h-12Z" opacity=".9"/>
<path d="M58,665v-11h5l2,2h7v9Z"/><path d="M41,684v-11h5l2,2h7v9Z"/><path d="M41,704v-11h5l2,2h7v9Z"/><path d="M41,724v-11h5l2,2h7v9Z"/><path d="M41,743v-11h5l2,2h7v9Z"/><path d="M24,763v-12h5l2,2h7v10Z"/>
</g>
<g fill="#7c7c7c">
<path d="M25,582l6,4 -6,1Z"/><path d="M25,592l8,6 -8,6Z"/><path d="M25,612l8,6 -8,6Z"/><path d="M24,634l10,0 -5,8Z"/><path d="M25,671l8,6 -8,6Z"/><path d="M25,691l8,6 -8,6Z"/><path d="M25,730l8,6 -8,6Z"/><path d="M8,750l8,6 -8,6Z"/>
</g>
<path d="M178,588l5,6h-10ZM178,766l-5,-6h10Z" fill="#c4c4c4"/>
<path d="M247,588l4,6 -4,6" fill="none" stroke="#888" stroke-width="1.200"/>
<!-- thumbs -->
<use href="#face" x="208" y="623" width="67" height="67"/>
<rect x="295" y="623" width="67" height="67" fill="#000"/>
<path d="M295,641C302,639 308,640 313,641L325,644 315,645C312,650 310,655 305,658L296,660ZM336,641C345,638 355,641 362,640V656L358,659 352,654C350,648 346,646 336,645Z" fill="#fff"/>
<rect x="383" y="623" width="66.500" height="67" fill="#000"/><ellipse cx="441" cy="631" rx="4.500" ry="5.500" fill="#fff"/>
<rect x="469" y="623" width="67" height="67" fill="#000"/><ellipse cx="476.500" cy="631" rx="4.500" ry="5.500" fill="#fff"/>
<circle cx="199" cy="759" r="7" fill="#7cc8ee" stroke="#b8dfef" stroke-width="1.200"/><path d="M199,753a6,6 0 0 1 0,12a8,8 0 0 0 0,-12" fill="#1c3e5a"/>
<path d="M530,758h68" stroke="#5f5f5f" stroke-width="2"/><circle cx="568" cy="758" r="6" fill="#999"/>
<!-- inspector swatches -->
<use href="#face" x="669" y="40" width="20" height="20"/>
<use href="#face" x="669" y="132" width="20" height="20"/>
<rect x="669" y="513" width="20" height="20" fill="#000"/><circle cx="686" cy="516" r="1.800" fill="#fff"/>
<path d="M862,48l6,-6M868,42l2,2M865,41l5,5" stroke="#d8d8d8" stroke-width="2"/><path d="M858,53l5,-6 2,2 -6,5Z" fill="#bbb"/>
<path d="M862,140l6,-6M865,133l5,5" stroke="#d8d8d8" stroke-width="2"/><path d="M858,145l5,-6 2,2 -6,5Z" fill="#bbb"/>
<path d="M668,74l9,7 -9,7Z" fill="#6e6e6e"/>
<path d="M669,116l4,4 7,-8" stroke="#eee" stroke-width="2" fill="none"/>
<circle cx="984" cy="116" r="4" fill="none" stroke="#c4c4c4" stroke-width="3.500"/><circle cx="984" cy="116" r="6.200" fill="none" stroke="#c4c4c4" stroke-width="1.500" stroke-dasharray="2.400 2.500"/>
<path d="M1016,33l5,5h-10ZM1016,551l-5,-5h10Z" fill="#ccc"/>
<circle cx="923" cy="170" r="6.300" fill="#999"/><circle cx="923" cy="244" r="6.300" fill="#999"/><circle cx="873" cy="421" r="6.300" fill="#999"/>
<!-- preview header -->
<path d="M764,570h98M764,573h98M764,576h98" stroke="#545454" stroke-width="1"/>
<rect x="866" y="560" width="1" height="24" fill="#2a2a2a"/><rect x="895" y="560" width="2" height="24" fill="#2f2f2f"/><rect x="927" y="560" width="2" height="24" fill="#2f2f2f"/><rect x="959" y="560" width="2" height="24" fill="#2f2f2f"/><rect x="1002" y="560" width="2" height="24" fill="#2f2f2f"/>
<path d="M875,566l12,6.500 -12,6.500Z" fill="#d0d0d0"/>
<circle cx="912" cy="572" r="7.500" fill="#cfcfcf"/><path d="M904.500,572h15" stroke="#3c3c3c" stroke-width="2.500"/>
<circle cx="940" cy="570" r="4" fill="#e8b41a"/><circle cx="949" cy="565" r="2.300" fill="#e8b41a"/><circle cx="947" cy="575" r="4" fill="none" stroke="#ccc"/>
<circle cx="975" cy="572" r="7.500" fill="#7fd0f0"/><path d="M967.500,573a7.500,7.500 0 0 0 15,0Z" fill="#d8d8d8"/><path d="M968,572h14" stroke="#3c3c3c" stroke-width="1.500"/>
<path d="M989,569h10l-5,6Z" fill="#ccc"/>
<path d="M1014,567v2.500M1014,572v2.500M1014,577v2.500" stroke="#ddd" stroke-width="2.200"/>
<!-- sphere -->
<g clip-path="url(#sph)">
<rect x="760" y="585" width="130" height="125" fill="#ece4e2"/>
<path d="M760,625L772,632 805,690H842L878,632 890,625V712H760Z" fill="#cf9e9a" filter="url(#b3)"/>
<path d="M760,710V680L800,700H850L890,680V710Z" fill="#c98f8b" filter="url(#b3)"/>
<path d="M781,605l8,-5 -4,7ZM865,605l-8,-5 4,7Z" fill="#b95c58"/>
<path d="M778,623l10,3 4,6ZM866,623l-10,3 -5,6ZM783,618l16,5M864,618l-15,5" stroke="#8a6a64" fill="#c07468" stroke-width="1"/>
<path d="M813,595c-2,5 -7,8 -7,12 0,4 6,3 8,-1 1,-3 1,-7 -1,-11Z" fill="#1f2428"/>
<path d="M829,595c-2,5 -2,8 0,11 3,4 8,3 7,-1 -1,-5 -5,-7 -7,-10Z" fill="#5d739f"/>
<path d="M802,605c3,7 8,9 12,8M843,605c-3,7 -8,9 -14,8" fill="none" stroke="#cfd2d4" stroke-width="1.500"/>
<path d="M788,634l8,-2 3,-3 4,2 3,2 5,4 4,4 -4,8 -18,-1 -6,-5Z" fill="#9a9ea2" filter="url(#b05)"/>
<path d="M858,634l-8,-2 -3,-3 -4,2 -3,2 -5,4 -4,4 4,8 18,-1 6,-5Z" fill="#9a9ea2" filter="url(#b05)"/>
<path d="M812,642l6,5 -4,4ZM835,642l-6,5 4,4" fill="#d8908a"/>
<path d="M794,655l6,4 10,-1 10,1 -6,6 -8,-1 -6,-3ZM853,655l-6,4 -10,-1 -9,1 5,6 9,-1 6,-3Z" fill="#544b4a" filter="url(#b05)"/>
<path d="M803,662l12,-1M833,661l13,1" stroke="#c07a74" stroke-width="2"/>
</g>
<!-- tag -->
<ellipse cx="1007" cy="726" rx="12" ry="9.500" fill="#1f4e92"/>
<path d="M1002,722l5,-1 6,5 -4,5 -6,-5Z" fill="#fff"/>
</svg>
</div></body></html>
